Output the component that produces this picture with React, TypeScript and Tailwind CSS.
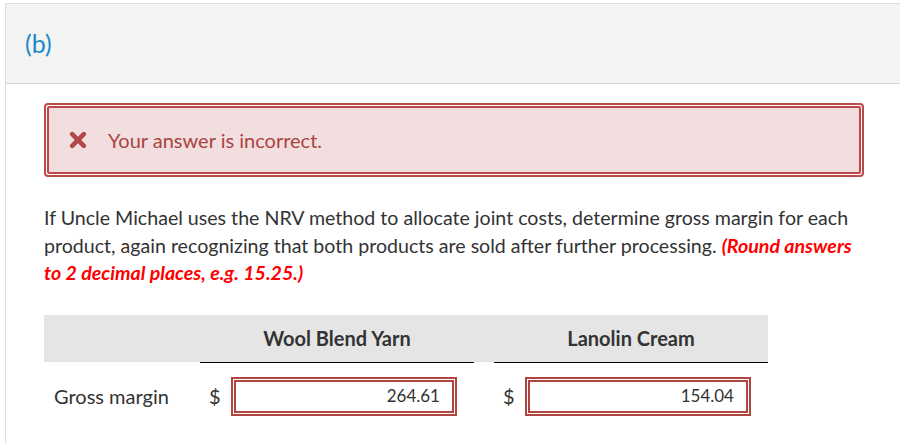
import React from "react";

function XIcon() {
  return (
    <svg width="18" height="18" viewBox="0 0 18 18" className="shrink-0">
      <path d="M3.2 3.2 L14.8 14.8 M14.8 3.2 L3.2 14.8" stroke="#b0484a" strokeWidth="4.6" strokeLinecap="round" fill="none" />
    </svg>
  );
}

function AnswerBox({ value }: { value: string }) {
  return (
    <div className="w-[226px] h-[39px] border-2 border-[#b0453f] bg-white p-px">
      <div className="h-full border-2 border-[#b0453f] flex items-center justify-end pr-[12px] text-[17px] text-[#333]">
        {value}
      </div>
    </div>
  );
}

export default function App() {
  return (
    <div className="w-[900px] h-[443px] overflow-hidden bg-white font-['Lato','Noto_Sans',sans-serif]">
      <div className="ml-[5px] mt-[3px] w-[920px] h-[460px] border border-[#dcdcdc] bg-white">
        <div className="h-[80px] bg-[#f4f4f4] border-b border-[#d6d6d6] flex items-center pl-[19px]">
          <span className="text-[25px] text-[#1d8ac8] leading-none">(b)</span>
        </div>
        <div className="pl-[38px] pt-[19px]">
          <div className="w-[820px] h-[74px] rounded-[4px] border-2 border-[#b94a48] bg-white p-px">
            <div className="h-full rounded-[2px] border-2 border-[#b94a48] bg-[#f2dede] flex items-center pl-[20px] gap-[21px]">
              <XIcon />
              <span className="text-[20px] text-[#a94442]">Your answer is incorrect.</span>
            </div>
          </div>
          <p className="mt-[27px] w-[825px] text-[19.6px] leading-[27.5px] text-[#333]">
            If Uncle Michael uses the NRV method to allocate joint costs, determine gross margin for each product, again recognizing that both products are sold after further processing.{" "}
            <span className="font-bold italic text-[#ff0000]">(Round answers to 2 decimal places, e.g. 15.25.)</span>
          </p>
          <div className="mt-[28px] w-[724px]">
            <div className="flex h-[47px] bg-[#e5e5e5] items-center text-[20px] font-bold text-[#333]">
              <div className="w-[156px]" />
              <div className="w-[274px] text-center">Wool Blend Yarn</div>
              <div className="w-[20px]" />
              <div className="w-[274px] text-center">Lanolin Cream</div>
            </div>
            <div className="flex h-px">
              <div className="w-[156px]" />
              <div className="w-[274px] bg-black" />
              <div className="w-[20px]" />
              <div className="w-[274px] bg-black" />
            </div>
            <div className="flex items-center mt-[14px] text-[20px] text-[#333]">
              <div className="w-[156px] pl-[10px]">Gross margin</div>
              <div className="w-[274px] flex items-center">
                <span className="w-[31px] pl-[9px]">$</span>
                <AnswerBox value="264.61" />
              </div>
              <div className="w-[20px]" />
              <div className="w-[274px] flex items-center">
                <span className="w-[31px] pl-[9px]">$</span>
                <AnswerBox value="154.04" />
              </div>
            </div>
          </div>
        </div>
      </div>
    </div>
  );
}
